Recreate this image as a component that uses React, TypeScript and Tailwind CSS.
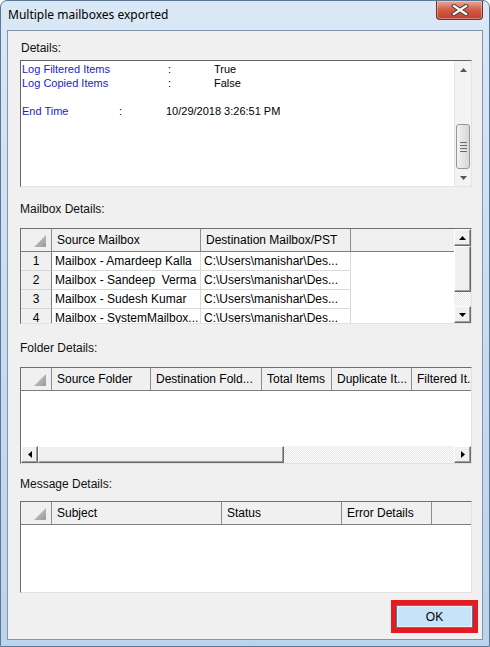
import React from 'react';

type Col = { label: string; w?: string };

const raised =
  'bg-[#f0f0f0] border border-t-white border-l-white border-b-[#6a6a6a] border-r-[#6a6a6a] shadow-[inset_-1px_-1px_0_#a0a0a0]';
const hatch =
  'bg-[image:repeating-conic-gradient(#e6e6e6_0%_25%,#ffffff_0%_50%)] bg-[length:2px_2px]';

function Arrow({ dir, color = '#000' }: { dir: 'up' | 'down' | 'left' | 'right'; color?: string }) {
  const pts = {
    up: '0,4 7,4 3.5,0',
    down: '0,0 7,0 3.5,4',
    left: '4,0 4,7 0,3.5',
    right: '0,0 0,7 4,3.5',
  }[dir];
  const vertical = dir === 'up' || dir === 'down';
  return (
    <svg width={vertical ? 7 : 4} height={vertical ? 4 : 7} viewBox={vertical ? '0 0 7 4' : '0 0 4 7'}>
      <polygon points={pts} fill={color} />
    </svg>
  );
}

function CornerCell() {
  return (
    <div className="w-[31px] shrink-0 h-full border-r border-[#8d8d8d] flex items-end justify-end pr-[5px] pb-[4px]">
      <svg width="12" height="12" viewBox="0 0 12 12">
        <defs>
          <linearGradient id="tri" x1="0" y1="0" x2="1" y2="1">
            <stop offset="0" stopColor="#c8c8c8" />
            <stop offset="1" stopColor="#9c9c9c" />
          </linearGradient>
        </defs>
        <polygon points="12,0 12,12 0,12" fill="url(#tri)" />
      </svg>
    </div>
  );
}

function Header({ cols }: { cols: Col[] }) {
  return (
    <div className="h-[23px] shrink-0 flex bg-[#f0f0f0] border-b border-[#7d7d7d] text-[12px] text-black">
      <CornerCell />
      {cols.map((c, i) => (
        <div
          key={i}
          className={`${c.w ?? 'flex-1'} shrink-0 h-full border-r border-[#8d8d8d] flex items-center pl-[5px] whitespace-nowrap overflow-hidden`}
        >
          {c.label}
        </div>
      ))}
    </div>
  );
}

function DetailsScroll() {
  return (
    <div className="w-[17px] shrink-0 h-full flex flex-col bg-[#f3f3f3] border-l border-[#e6e6e6]">
      <div className="h-[17px] flex items-center justify-center">
        <Arrow dir="up" color="#555" />
      </div>
      <div className="h-[46px]" />
      <div className="h-[45px] mx-[1px] rounded-[3px] border border-[#979797] bg-gradient-to-r from-[#f2f2f2] to-[#d6d6d6] flex flex-col items-center justify-center gap-[2px]">
        <div className="w-[7px] h-px bg-[#6b6b6b]" />
        <div className="w-[7px] h-px bg-[#6b6b6b]" />
        <div className="w-[7px] h-px bg-[#6b6b6b]" />
        <div className="w-[7px] h-px bg-[#6b6b6b]" />
      </div>
      <div className="flex-1 flex items-center justify-center">
        <Arrow dir="down" color="#555" />
      </div>
    </div>
  );
}

const mailboxes = [
  'Mailbox - Amardeep Kalla',
  'Mailbox - Sandeep  Verma',
  'Mailbox - Sudesh Kumar',
  'Mailbox - SystemMailbox...',
];

function MailboxTable() {
  return (
    <div className="h-[96px] flex bg-white border border-t-[#6e6e6e] border-l-[#6e6e6e] border-r-[#e2e2e2] border-b-[#e2e2e2] overflow-hidden">
      <div className="flex-1 flex flex-col min-w-0">
        <Header
          cols={[
            { label: 'Source Mailbox', w: 'w-[149px]' },
            { label: 'Destination Mailbox/PST', w: 'w-[150px]' },
            { label: '', w: 'flex-1 border-r-0' },
          ]}
        />
        <div className="flex-1 overflow-hidden text-[12px] text-black">
          {mailboxes.map((m, i) => (
            <div key={i} className="h-[19px] flex shrink-0">
              <div className="w-[31px] shrink-0 bg-[#f0f0f0] border-r border-b border-r-[#7d7d7d] border-b-[#d5d5d5] flex items-center justify-center">
                {i + 1}
              </div>
              <div className="w-[149px] shrink-0 border-r border-b border-[#dadada] flex items-center pl-[3px] whitespace-pre overflow-hidden">
                {m}
              </div>
              <div className="w-[150px] shrink-0 border-r border-b border-[#dadada] flex items-center pl-[3px] whitespace-nowrap overflow-hidden">
                C:\Users\manishar\Des...
              </div>
            </div>
          ))}
        </div>
      </div>
      <div className="w-[17px] shrink-0 flex flex-col">
        <div className={`h-[17px] shrink-0 flex items-center justify-center ${raised}`}>
          <Arrow dir="up" />
        </div>
        <div className={`h-[46px] shrink-0 ${raised}`} />
        <div className={`flex-1 ${hatch}`} />
        <div className={`h-[17px] shrink-0 flex items-center justify-center ${raised}`}>
          <Arrow dir="down" />
        </div>
      </div>
    </div>
  );
}

function FolderTable() {
  return (
    <div className="h-[97px] flex flex-col bg-white border border-t-[#6e6e6e] border-l-[#6e6e6e] border-r-[#e2e2e2] border-b-[#e2e2e2] overflow-hidden">
      <Header
        cols={[
          { label: 'Source Folder', w: 'w-[99px]' },
          { label: 'Destination Fold...', w: 'w-[111px]' },
          { label: 'Total Items', w: 'w-[70px]' },
          { label: 'Duplicate It...', w: 'w-[80px]' },
          { label: 'Filtered It...', w: 'flex-1 border-r-0' },
        ]}
      />
      <div className="flex-1" />
      <div className="h-[17px] shrink-0 flex">
        <div className={`w-[17px] shrink-0 flex items-center justify-center ${raised}`}>
          <Arrow dir="left" />
        </div>
        <div className={`w-[246px] shrink-0 ${raised}`} />
        <div className={`flex-1 ${hatch}`} />
        <div className={`w-[17px] shrink-0 flex items-center justify-center ${raised}`}>
          <Arrow dir="right" />
        </div>
      </div>
    </div>
  );
}

function MessageTable() {
  return (
    <div className="h-[92px] flex flex-col bg-white border border-t-[#6e6e6e] border-l-[#6e6e6e] border-r-[#e2e2e2] border-b-[#e2e2e2] overflow-hidden">
      <Header
        cols={[
          { label: 'Subject', w: 'w-[170px]' },
          { label: 'Status', w: 'w-[120px]' },
          { label: 'Error Details', w: 'w-[90px]' },
          { label: '', w: 'flex-1 border-r-0' },
        ]}
      />
      <div className="flex-1" />
    </div>
  );
}

function Label({ children, className = '' }: { children: React.ReactNode; className?: string }) {
  return <div className={`h-[14px] leading-[14px] text-[12px] text-[#111] ${className}`}>{children}</div>;
}

export default function App() {
  return (
    <div className="w-[490px] h-[647px] flex flex-col bg-gradient-to-b from-[#dae8f6] via-[#c9dcf0] to-[#bcd3ec] border border-[#5d7896] rounded-t-[7px] overflow-hidden font-['Liberation_Sans',Arial,sans-serif]">
      {/* title bar */}
      <div className="h-[29px] shrink-0 flex items-start justify-between">
        <div className="pl-[7px] pt-[6px] text-[12px] leading-[16px] text-black font-['Noto_Sans','Open_Sans',sans-serif]">
          Multiple mailboxes exported
        </div>
        <div className="mr-[6px] w-[47px] h-[19px] rounded-b-[4px] border border-t-0 border-[#7a2c22] bg-gradient-to-b from-[#e7a89a] via-[#d25b47] to-[#c1402c] shadow-[inset_0_0_0_1px_rgba(255,255,255,0.35)] flex items-center justify-center">
          <svg width="18" height="12" viewBox="0 0 18 12">
            <path d="M3 2 L15 10 M15 2 L3 10" stroke="#4a3a38" strokeWidth="4.2" strokeLinecap="square" />
            <path d="M3 2 L15 10 M15 2 L3 10" stroke="#ffffff" strokeWidth="2.3" strokeLinecap="square" />
          </svg>
        </div>
      </div>

      {/* client area */}
      <div className="mx-[6px] mb-[6px] flex-1 flex flex-col border border-[#8196ad] bg-[#f0f0f0] pl-[12px] pr-[10px]">
        <Label className="mt-[10px] pl-[1px]">Details:</Label>
        <div className="mt-[5px] h-[127px] shrink-0 flex bg-white border border-t-[#646464] border-l-[#646464] border-r-[#e3e3e3] border-b-[#e3e3e3]">
          <div className="flex-1 pl-[1px] pt-[1px] text-[11px] leading-[14px]">
            <div className="flex">
              <span className="w-[146px] shrink-0 text-[#1c1cc4]">Log Filtered Items</span>
              <span className="w-[46px] shrink-0 text-black">:</span>
              <span className="text-black">True</span>
            </div>
            <div className="flex">
              <span className="w-[146px] shrink-0 text-[#1c1cc4]">Log Copied Items</span>
              <span className="w-[46px] shrink-0 text-black">:</span>
              <span className="text-black">False</span>
            </div>
            <div className="h-[14px]" />
            <div className="flex">
              <span className="w-[97px] shrink-0 text-[#1c1cc4]">End Time</span>
              <span className="w-[47px] shrink-0 text-black">:</span>
              <span className="text-black">10/29/2018 3:26:51 PM</span>
            </div>
          </div>
          <DetailsScroll />
        </div>

        <Label className="mt-[15px]">Mailbox Details:</Label>
        <div className="mt-[12px]">
          <MailboxTable />
        </div>

        <Label className="mt-[17px]">Folder Details:</Label>
        <div className="mt-[12px]">
          <FolderTable />
        </div>

        <Label className="mt-[13px] overflow-hidden h-[13px]">Message Details:</Label>
        <div className="mt-[10px]">
          <MessageTable />
        </div>

        <div className="mt-[7px] flex justify-end -mr-[6px]">
          <div className="w-[87px] h-[33px] border-[5px] border-[#e31b23] flex">
            <button className="flex-1 border border-[#3c7fb1] bg-[#c6e3f9] shadow-[inset_0_0_0_1px_#e4f2fc] text-[12px] text-black flex items-center justify-center">
              OK
            </button>
          </div>
        </div>
      </div>
    </div>
  );
}
